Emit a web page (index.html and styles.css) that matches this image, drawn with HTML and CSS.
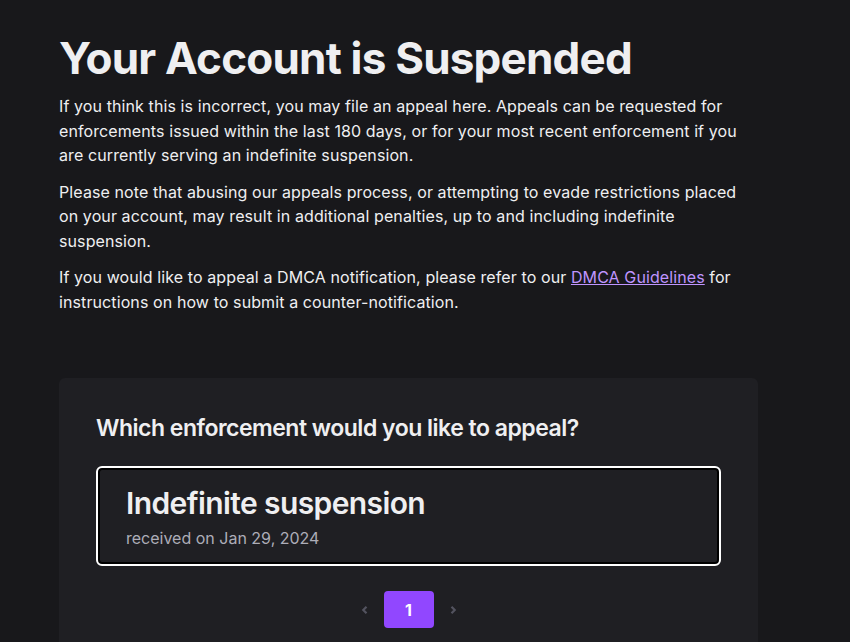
FILE: index.html
```html
<!DOCTYPE html>
<html>
<head>
<meta charset="utf-8">
<link rel="stylesheet" href="styles.css">
</head>
<body>
<main class="page">
  <h1 class="title">Your Account is Suspended</h1>
  <p class="text">If you think this is incorrect, you may file an appeal here. Appeals can be requested for enforcements issued within the last 180 days, or for your most recent enforcement if you are currently serving an indefinite suspension.</p>
  <p class="text">Please note that abusing our appeals process, or attempting to evade restrictions placed on your account, may result in additional penalties, up to and including indefinite suspension.</p>
  <p class="text">If you would like to appeal a DMCA notification, please refer to our <a class="link" href="#">DMCA Guidelines</a> for instructions on how to submit a counter-notification.</p>

  <section class="card">
    <h2 class="card-title">Which enforcement would you like to appeal?</h2>
    <div class="option">
      <div class="option-title">Indefinite suspension</div>
      <div class="option-sub">received on Jan 29, 2024</div>
    </div>
    <nav class="pager">
      <span class="arrow">
        <svg width="10" height="10" viewBox="0 0 10 10"><path d="M6.5 1.8 L3.3 5 L6.5 8.2" fill="none" stroke="currentColor" stroke-width="2.2"/></svg>
      </span>
      <span class="page-btn">1</span>
      <span class="arrow">
        <svg width="10" height="10" viewBox="0 0 10 10"><path d="M3.5 1.8 L6.7 5 L3.5 8.2" fill="none" stroke="currentColor" stroke-width="2.2"/></svg>
      </span>
    </nav>
  </section>
</main>
</body>
</html>
```

FILE: styles.css
```css
html, body {
  margin: 0;
  padding: 0;
  background: #18181b;
  color: #efeff1;
  font-family: Inter, "Noto Sans", sans-serif;
}
.page {
  width: 699px;
  padding: 30px 0 0 59px;
}
.title {
  margin: 0;
  font-size: 44px;
  line-height: 56px;
  font-weight: 700;
  letter-spacing: -0.8px;
  color: #efeff1;
}
.text {
  margin: 8px 0 12px;
  font-size: 16px;
  line-height: 24.5px;
  letter-spacing: 0.1px;
  color: #efeff1;
}
.text + .text {
  margin-top: 0;
}
.link {
  color: #bf94ff;
  text-decoration: underline;
}
.card {
  margin-top: 64px;
  background: #1f1f23;
  border-radius: 6px;
  padding: 35px 37px 40px 37px;
}
.card-title {
  margin: 0 0 22px;
  font-size: 23px;
  line-height: 31px;
  font-weight: 600;
  letter-spacing: -0.5px;
}
.option {
  border: 2px solid #ffffff;
  border-radius: 6px;
  box-shadow: inset 0 0 0 2px #000000;
  background: #1f1f23;
  padding: 15px 28px 15px;
}
.option-title {
  font-size: 30px;
  line-height: 40px;
  font-weight: 600;
  letter-spacing: -0.6px;
}
.option-sub {
  margin-top: 4px;
  font-size: 16px;
  line-height: 22px;
  color: #adadb8;
}
.pager {
  display: flex;
  justify-content: center;
  align-items: center;
  gap: 14px;
  margin-top: 25px;
}
.arrow {
  display: flex;
  color: #53535f;
}
.page-btn {
  width: 50px;
  height: 37px;
  border-radius: 4px;
  background: #9147ff;
  color: #fff;
  font-weight: 700;
  font-size: 16px;
  display: flex;
  align-items: center;
  justify-content: center;
}
```
